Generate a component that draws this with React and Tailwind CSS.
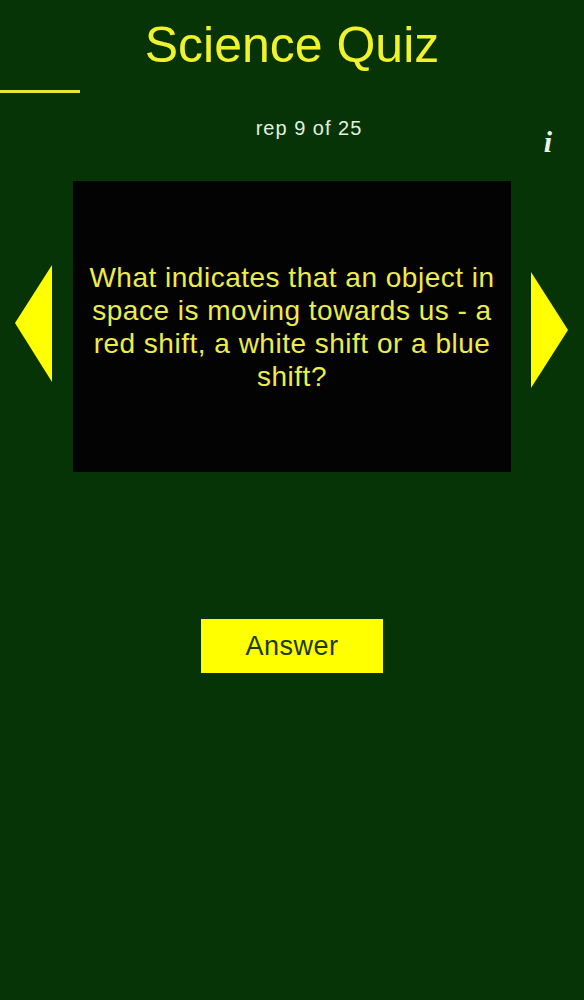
export default function App() {
  return (
    <div
      className="min-h-screen w-full bg-[#063406] flex flex-col"
      style={{ fontFamily: '"Liberation Sans", Arial, sans-serif' }}
    >
      {/* Header */}
      <h1 className="pt-[15px] text-center text-[50px] leading-[60px] text-[#f0f22c]">
        Science Quiz
      </h1>
      <div className="mt-[15px] h-[3px] w-[80px] bg-[#e8e82a]" />

      {/* Counter + info */}
      <div className="relative mt-[23px] h-[24px]">
        <p className="pl-[34px] text-center text-[20px] leading-[24px] tracking-[1px] text-[#e2f0dc]">
          rep 9 of 25
        </p>
        <span
          className="absolute right-[32px] top-[11px] text-[30px] leading-[30px] font-bold italic text-[#e8f4e4]"
          style={{ fontFamily: '"Liberation Serif", serif' }}
        >
          i
        </span>
      </div>

      {/* Question row */}
      <div className="mt-[41px] flex items-start">
        <button className="ml-[15px] mt-[84px] w-[37px] flex-none">
          <svg width="37" height="117" viewBox="0 0 37 117">
            <polygon points="0,58 37,0 37,117" fill="#ffff00" />
          </svg>
        </button>
        <div className="ml-[21px] flex h-[291px] w-[438px] flex-none items-center justify-center bg-[#030303] px-[8px]">
          <p className="text-center text-[28px] leading-[33px] tracking-[0.5px] text-[#ecec4a]">
            What indicates that an object in
            <br />
            space is moving towards us - a
            <br />
            red shift, a white shift or a blue
            <br />
            shift?
          </p>
        </div>
        <button className="ml-[20px] mt-[91px] w-[37px] flex-none">
          <svg width="37" height="116" viewBox="0 0 37 116">
            <polygon points="0,0 37,58 0,116" fill="#ffff00" />
          </svg>
        </button>
      </div>

      {/* Answer */}
      <div className="mt-[147px] flex justify-center">
        <button className="h-[54px] w-[182px] bg-[#ffff00] text-[27px] tracking-[0.5px] text-[#1c3a10]">
          Answer
        </button>
      </div>
    </div>
  );
}
